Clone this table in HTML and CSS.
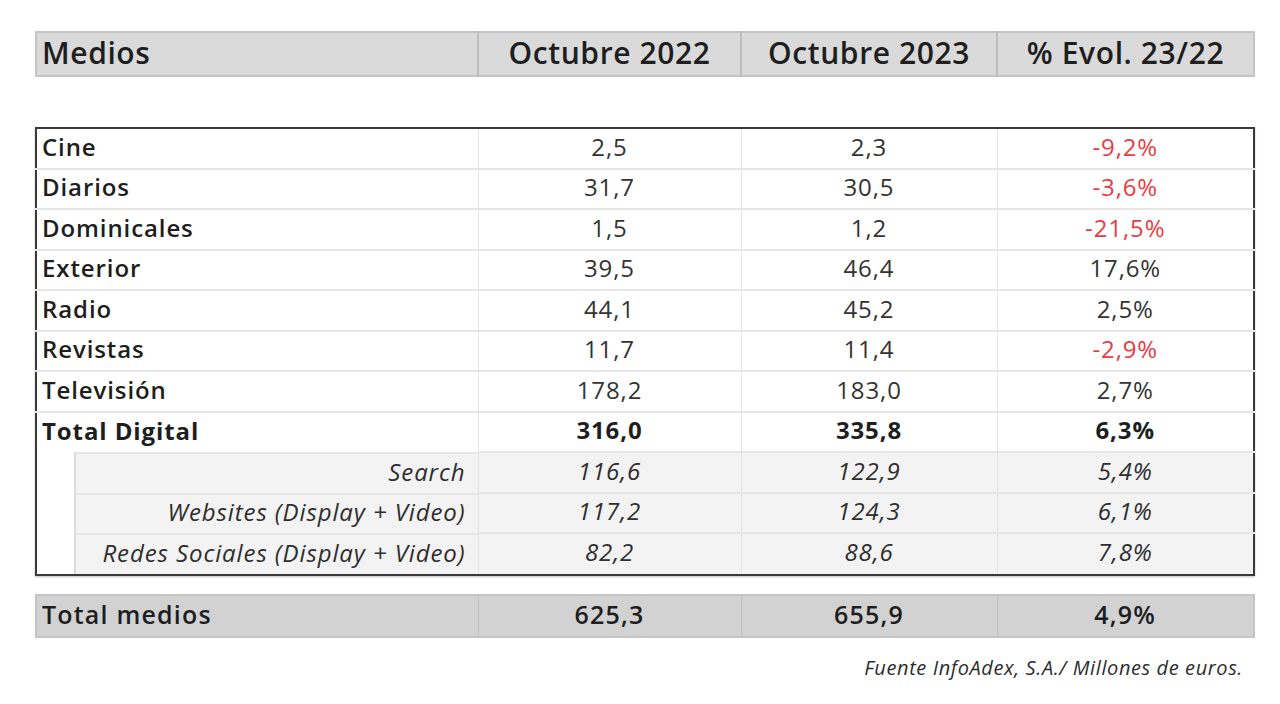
FILE: index.html
```html
<!DOCTYPE html>
<html lang="es">
<head>
<meta charset="utf-8">
<title>Inversión publicitaria por medios</title>
<link rel="stylesheet" href="styles.css">
</head>
<body>
<div class="page">
  <table class="tbl head">
    <colgroup><col class="c1"><col class="c2"><col class="c3"><col class="c4"></colgroup>
    <tr>
      <th class="label">Medios</th>
      <th>Octubre 2022</th>
      <th>Octubre 2023</th>
      <th>% Evol. 23/22</th>
    </tr>
  </table>

  <table class="tbl main">
    <colgroup><col class="c1"><col class="c2"><col class="c3"><col class="c4"></colgroup>
    <tr class="first"><td class="label">Cine</td><td>2,5</td><td>2,3</td><td class="neg">-9,2%</td></tr>
    <tr><td class="label">Diarios</td><td>31,7</td><td>30,5</td><td class="neg">-3,6%</td></tr>
    <tr><td class="label">Dominicales</td><td>1,5</td><td>1,2</td><td class="neg">-21,5%</td></tr>
    <tr><td class="label">Exterior</td><td>39,5</td><td>46,4</td><td>17,6%</td></tr>
    <tr><td class="label">Radio</td><td>44,1</td><td>45,2</td><td>2,5%</td></tr>
    <tr><td class="label">Revistas</td><td>11,7</td><td>11,4</td><td class="neg">-2,9%</td></tr>
    <tr><td class="label">Televisión</td><td>178,2</td><td>183,0</td><td>2,7%</td></tr>
    <tr class="bold"><td class="label">Total Digital</td><td>316,0</td><td>335,8</td><td>6,3%</td></tr>
    <tr class="sub"><td class="sublabel"><div class="subbox">Search</div></td><td>116,6</td><td>122,9</td><td>5,4%</td></tr>
    <tr class="sub"><td class="sublabel"><div class="subbox">Websites (Display + Video)</div></td><td>117,2</td><td>124,3</td><td>6,1%</td></tr>
    <tr class="sub"><td class="sublabel"><div class="subbox">Redes Sociales (Display + Video)</div></td><td>82,2</td><td>88,6</td><td>7,8%</td></tr>
  </table>

  <table class="tbl total">
    <colgroup><col class="c1"><col class="c2"><col class="c3"><col class="c4"></colgroup>
    <tr><td class="label">Total medios</td><td>625,3</td><td>655,9</td><td>4,9%</td></tr>
  </table>

  <p class="source">Fuente InfoAdex, S.A./ Millones de euros.</p>
</div>
</body>
</html>
```

FILE: styles.css
```css
html, body {
  margin: 0;
  padding: 0;
  background: #ffffff;
}

body {
  font-family: "Open Sans", "Noto Sans", "Liberation Sans", sans-serif;
  color: #2b2b2b;
}

.page {
  width: 1218px;
  padding: 31px 0 0 35px;
}

.tbl {
  width: 1218px;
  table-layout: fixed;
  border-collapse: collapse;
}

.c1 { width: 442px; }
.c2 { width: 263px; }
.c3 { width: 256px; }
.c4 { width: 257px; }

/* header */
.head {
  background: #dadada;
  border: 2px solid #c4c4c4;
}

.head th {
  height: 40px;
  padding: 0 0 2px 0;
  font-size: 30px;
  letter-spacing: 0.6px;
  font-weight: 600;
  color: #1e1e1e;
  text-align: center;
  border-left: 2px solid #bdbdbd;
  line-height: 1;
}

.head th.label {
  text-align: left;
  padding-left: 5px;
  border-left: none;
}

/* main body */
.main {
  margin-top: 50px;
  border: 2px solid #3a3a3a;
  box-shadow: 0 1px 2px rgba(0,0,0,0.25);
}

.main td {
  height: 35.5px;
  padding: 0 0 3px 0;
  font-size: 24px;
  letter-spacing: 0.9px;
  text-align: center;
  border-top: 2px solid #e6e6e6;
  border-left: 1px solid #e4e4e4;
  line-height: 1;
  color: #333333;
}

.main tr.first td {
  border-top: none;
  height: 35.5px;
}

.main td.label {
  text-align: left;
  padding-left: 5px;
  font-weight: 600;
  color: #1e1e1e;
  border-left: none;
}

.main tr.bold td {
  font-weight: 700;
  color: #1e1e1e;
}

.main td.neg {
  color: #ec3b41;
}

.main tr.sub td {
  background: #f3f3f3;
  font-style: italic;
  color: #2e2e2e;
}

.main tr.sub td.sublabel {
  background: #ffffff;
  border-left: none;
  border-top: none;
  padding: 0 0 0 37px;
  height: 40.5px;
}

.subbox {
  height: 40.5px;
  display: flex;
  align-items: center;
  justify-content: flex-end;
  padding: 0 12px 3px 0;
  background: #f3f3f3;
  border-left: 2px solid #dcdcdc;
  border-top: 2px solid #e6e6e6;
  box-sizing: border-box;
}

/* total */
.total {
  margin-top: 18px;
  background: #d2d2d2;
  border: 2px solid #c4c4c4;
}

.total td {
  height: 38px;
  padding: 0 0 2px 0;
  font-size: 25px;
  letter-spacing: 1.2px;
  font-weight: 600;
  text-align: center;
  color: #1e1e1e;
  border-left: 1px solid #c0c0c0;
  line-height: 1;
}

.total td.label {
  text-align: left;
  padding-left: 5px;
  border-left: none;
}

.source {
  margin: 16px 0 0 0;
  width: 1208px;
  text-align: right;
  font-size: 20px;
  letter-spacing: 0.6px;
  font-style: italic;
  color: #2e2e2e;
}
```
